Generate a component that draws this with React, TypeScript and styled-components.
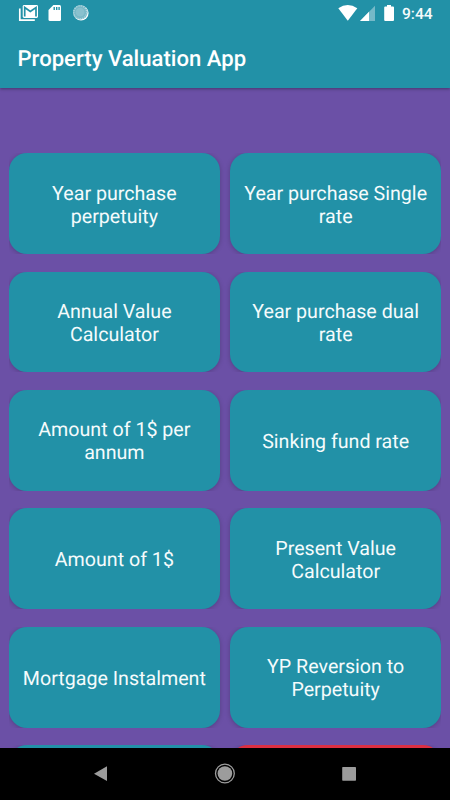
import React from "react";
import styled, { createGlobalStyle } from "styled-components";

const GlobalStyle = createGlobalStyle`
  *, *::before, *::after { box-sizing: border-box; }
  html, body { margin: 0; padding: 0; overflow: hidden; }
`;

const Screen = styled.div`
  width: 450px;
  height: 800px;
  display: flex;
  flex-direction: column;
  overflow: hidden;
  background: #6b50a6;
  font-family: Roboto, "Liberation Sans", sans-serif;
  text-rendering: geometricPrecision;
  color: #fff;
`;

const Header = styled.header`
  flex: none;
  height: 87.5px;
  background: #2291a7;
  box-shadow: 0 1px 3px rgba(0, 0, 0, 0.36);
`;

const StatusBar = styled.div`
  height: 28px;
  display: flex;
  justify-content: space-between;

  svg { display: block; }
`;

const Clock = styled.span`
  width: 50px;
  padding-left: 2px;
  font-size: 15.6px;
  font-weight: 500;
  line-height: 28px;
  color: #f4fafb;
`;

const StatusRight = styled.div`
  display: flex;
`;

const Title = styled.h1`
  margin: 0;
  padding-left: 17.5px;
  font-size: 22.1px;
  font-weight: 500;
  line-height: 62px;
  white-space: nowrap;
`;

const Content = styled.main`
  flex: 1;
  min-height: 0;
  overflow: hidden;
  padding: 65.7px 9px 0;
  display: flex;
  flex-direction: column;
  gap: 17.6px;
`;

const Row = styled.div`
  flex: none;
  height: 100.8px;
  display: grid;
  grid-template-columns: 1fr 1fr;
  gap: 10.6px;
  overflow: hidden;
`;

const Card = styled.button<{ $danger?: boolean }>`
  margin: 0;
  padding: 2px 9px 0;
  border: 0;
  border-radius: 18px;
  background: ${(p) => (p.$danger ? "#dc2f42" : "#2291a7")};
  box-shadow: 0 1px 5px rgba(0, 0, 0, 0.22);
  color: #f5fbfc;
  font: 400 19.65px/23px Roboto, "Liberation Sans", sans-serif;
  text-rendering: geometricPrecision;
  text-align: center;
`;

const NavBar = styled.nav`
  flex: none;
  height: 52px;
  background: #000;

  svg { display: block; }
`;

const rows: string[][] = [
  ["Year purchase perpetuity", "Year purchase Single rate"],
  ["Annual Value Calculator", "Year purchase dual rate"],
  ["Amount of 1$ per annum", "Sinking fund rate"],
  ["Amount of 1$", "Present Value Calculator"],
  ["Mortgage Instalment", "YP Reversion to Perpetuity"],
];

const NotificationIcons = () => (
  <svg width="110" height="28" viewBox="0 0 110 28" fill="none">
    <path d="M19.8 8.5V20.2H34.8" stroke="#fff" strokeWidth="1.7" />
    <rect x="22.7" y="5" width="15.3" height="13" rx="1.4" fill="#fff" />
    <path d="M24.7 16.5V7.5L30.3 11.4L36 7.5V16.5" stroke="#2291a7" strokeWidth="1.7" />
    <path d="M53.4 5H59.6Q61 5 61 6.5V19.5Q61 21 59.6 21H50Q48.5 21 48.5 19.5V10Z" fill="#fff" />
    <path d="M54.2 7V10M56.7 7V10M59.1 7V10" stroke="#2291a7" strokeWidth="1.4" />
    <circle cx="81" cy="13" r="7.6" fill="#fff" />
    <circle cx="80.3" cy="12.3" r="7.3" fill="#78b8c7" />
    <circle cx="80.2" cy="12.3" r="6.4" stroke="#b4d8e0" strokeWidth="1.3" strokeDasharray="1.2 1.1" />
    <circle cx="80.1" cy="12.2" r="4.4" fill="#8ac1ce" />
  </svg>
);

const SystemIcons = () => (
  <svg width="64" height="28" viewBox="336 0 64 28">
    <path d="M338.3 8.3Q347.7 1.9 357.3 8.3L347.8 20.7Z" fill="#fff" />
    <path d="M360 20.9L375 5.7V20.9Z" fill="#75b9c8" />
    <path d="M360 20.9L369 11.8V20.9Z" fill="#fff" />
    <path d="M387 5H391V6.4H393Q394 6.4 394 7.5V20Q394 21 393 21H385.2Q384.2 21 384.2 20V7.5Q384.2 6.4 385.2 6.4H387Z" fill="#fff" />
  </svg>
);

const NavIcons = () => (
  <svg width="450" height="52" viewBox="0 748 450 52">
    <path d="M94 773.7L107 766.2V781.1Z" fill="#9c9c9c" />
    <circle cx="224.9" cy="773.5" r="9.4" fill="none" stroke="#9c9c9c" strokeWidth="1.3" />
    <circle cx="224.9" cy="773.5" r="7.3" fill="#9c9c9c" />
    <rect x="342.2" y="767" width="13.8" height="13.8" rx="0.7" fill="#9c9c9c" />
  </svg>
);

export default function App() {
  return (
    <>
      <GlobalStyle />
      <Screen>
        <Header>
          <StatusBar>
            <NotificationIcons />
            <StatusRight>
              <SystemIcons />
              <Clock>9:44</Clock>
            </StatusRight>
          </StatusBar>
          <Title>Property Valuation App</Title>
        </Header>
        <Content>
          {rows.map((labels) => (
            <Row key={labels[0]}>
              {labels.map((label) => (
                <Card key={label}>{label}</Card>
              ))}
            </Row>
          ))}
          <Row>
            <Card />
            <Card $danger />
          </Row>
        </Content>
        <NavBar>
          <NavIcons />
        </NavBar>
      </Screen>
    </>
  );
}
